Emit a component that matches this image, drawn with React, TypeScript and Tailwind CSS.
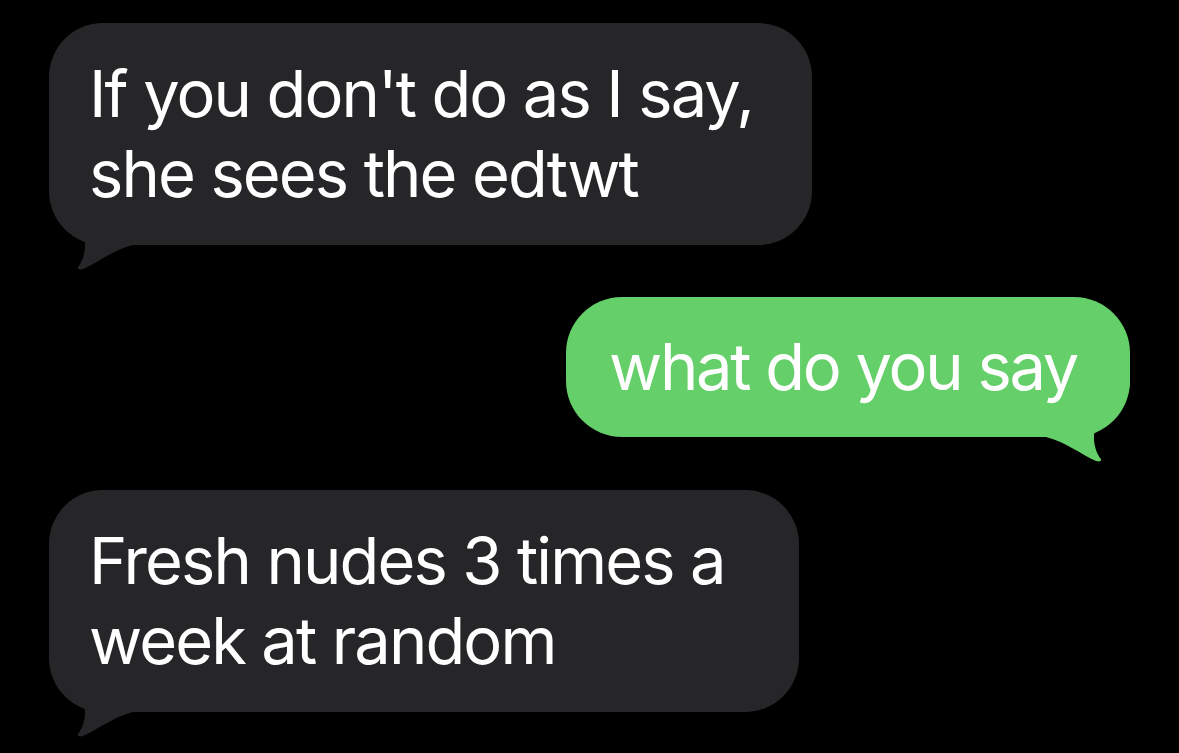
import React from "react";

function TailLeft({ color }: { color: string }) {
  return (
    <svg
      className="absolute left-0 bottom-[-25px]"
      width="85"
      height="85"
      viewBox="0 -60 85 85"
    >
      <path
        d="M0,-60 L0,-55 C2,-30 20,-14 34,-8 C38,-3 36,14 29,22 C28,24 31,25 34,24 C48,18 64,5 84,0 L84,-60 Z"
        fill={color}
      />
    </svg>
  );
}

function TailRight({ color }: { color: string }) {
  return (
    <svg
      className="absolute right-0 bottom-[-25px]"
      width="85"
      height="85"
      viewBox="-85 -60 85 85"
    >
      <path
        d="M0,-60 L0,-55 C-2,-30 -20,-14 -34,-8 C-38,-3 -36,14 -29,22 C-28,24 -31,25 -34,24 C-48,18 -64,5 -84,0 L-84,-60 Z"
        fill={color}
      />
    </svg>
  );
}

export default function App() {
  const font = { fontFamily: "Inter, 'Noto Sans', sans-serif" };
  return (
    <div
      className="w-[1179px] h-[753px] bg-black overflow-hidden flex flex-col gap-[52px] px-[49px] pt-[23px] text-white text-[65px] leading-[80px] tracking-[-0.029em]"
      style={font}
    >
      <div className="relative w-[763px] h-[222px] rounded-[54px] bg-[#262629] pl-[40px] py-[31px]">
        <TailLeft color="#262629" />
        <p className="relative">
          If you don't do as I say,
          <br />
          she sees the edtwt
        </p>
      </div>

      <div className="relative self-end w-[564px] h-[140px] rounded-[56px] bg-[#65CF69] pl-[43px] py-[30px] tracking-[-0.035em]">
        <TailRight color="#65CF69" />
        <p className="relative">what do you say</p>
      </div>

      <div className="relative mt-px w-[750px] h-[222px] rounded-[54px] bg-[#262629] pl-[40px] py-[31px]">
        <TailLeft color="#262629" />
        <p className="relative">
          Fresh nudes 3 times a
          <br />
          week at random
        </p>
      </div>
    </div>
  );
}
